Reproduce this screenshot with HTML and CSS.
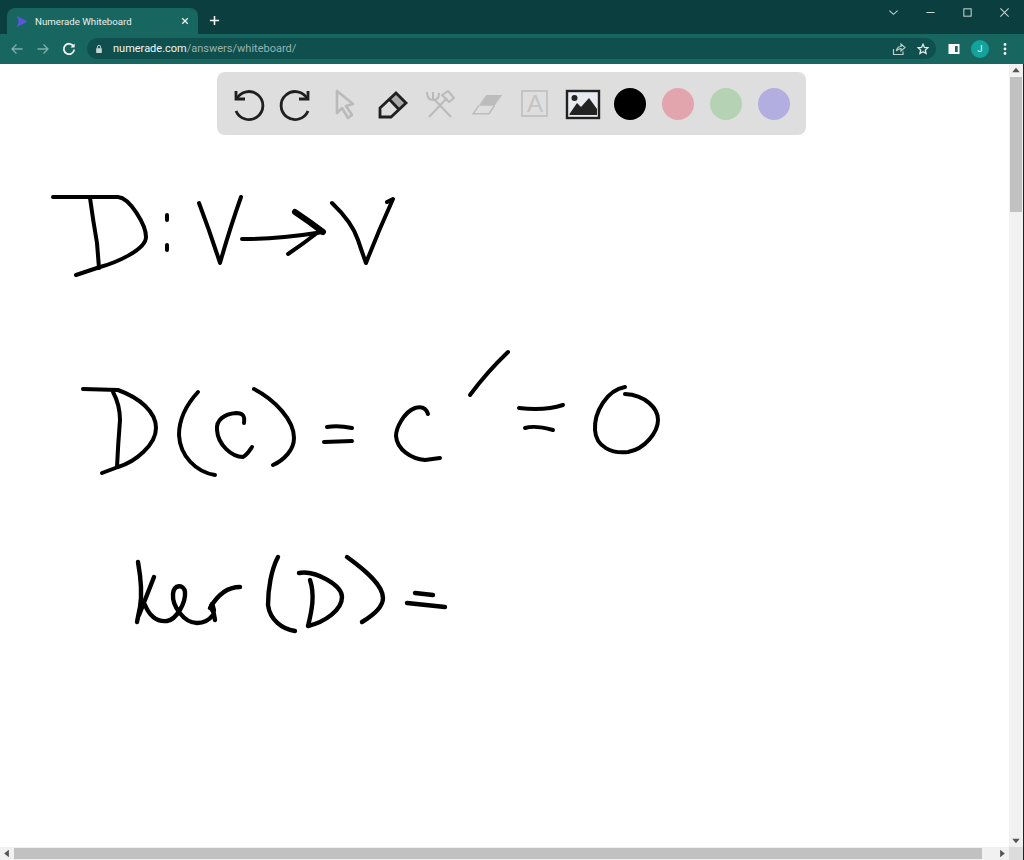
FILE: index.html
```html
<!DOCTYPE html>
<html lang="en">
<head>
<meta charset="utf-8">
<title>Numerade Whiteboard</title>
<link rel="stylesheet" href="styles.css">
</head>
<body>
<div class="window">
  <header class="titlebar">
    <div class="tab">
      <svg class="favicon" viewBox="0 0 14 14"><path d="M1 0.5 L13.5 7 L1 13.5 L3.2 7 Z"/></svg>
      <span class="tab-title">Numerade Whiteboard</span>
      <svg class="tab-close" viewBox="0 0 10 10"><path d="M1.5 1.5 L8.5 8.5 M8.5 1.5 L1.5 8.5"/></svg>
    </div>
    <svg class="new-tab" viewBox="0 0 12 12"><path d="M6 1 V11 M1 6 H11"/></svg>
    <div class="win-controls">
      <svg class="win-icon" viewBox="0 0 12 12"><path d="M1.5 4 L6 8 L10.5 4"/></svg>
      <svg class="win-icon" viewBox="0 0 12 12"><path d="M1.5 6 H10.5"/></svg>
      <svg class="win-icon" viewBox="0 0 12 12"><rect x="2" y="2" width="8" height="8"/></svg>
      <svg class="win-icon" viewBox="0 0 12 12"><path d="M1.5 1.5 L10.5 10.5 M10.5 1.5 L1.5 10.5"/></svg>
    </div>
  </header>
  <nav class="navbar">
    <svg class="nav-icon dim" viewBox="0 0 14 14"><path d="M12.5 7 H2 M6.5 2.5 L2 7 L6.5 11.5"/></svg>
    <svg class="nav-icon dim" viewBox="0 0 14 14"><path d="M1.5 7 H12 M7.5 2.5 L12 7 L7.5 11.5"/></svg>
    <svg class="nav-icon" viewBox="0 0 14 14"><path d="M11.6 4.5 A5.2 5.2 0 1 0 12.2 7.5"/><path class="solid" d="M12.6 1.5 V5.6 H8.5 Z"/></svg>
    <div class="omnibox">
      <svg class="lock" viewBox="0 0 10 12"><path class="lock-body" d="M1.5 5 H8.5 V11 H1.5 Z"/><path class="lock-shackle" d="M3 5 V3.5 A2 2 0 0 1 7 3.5 V5"/></svg>
      <span class="url"><span class="url-host">numerade.com</span>/answers/whiteboard/</span>
      <svg class="omni-icon share" viewBox="0 0 14 14"><path d="M1.5 7 V12.5 H11 V9.5 M4.5 9 Q5 4.5 9 4.5 V2 L13 5.5 L9 9 V6.7 Q6 6.7 4.5 9 Z"/></svg>
      <svg class="omni-icon star" viewBox="0 0 14 14"><path d="M7 1.5 L8.7 5.2 L12.7 5.6 L9.7 8.3 L10.6 12.3 L7 10.2 L3.4 12.3 L4.3 8.3 L1.3 5.6 L5.3 5.2 Z"/></svg>
    </div>
    <svg class="panel-icon" viewBox="0 0 12 12"><path d="M0.5 1 H11.5 V11 H0.5 Z M7 3 V9 H9.7 V3 Z" fill-rule="evenodd"/></svg>
    <span class="avatar">J</span>
    <svg class="menu-icon" viewBox="0 0 4 14"><circle cx="2" cy="2.5" r="1.4"/><circle cx="2" cy="7" r="1.4"/><circle cx="2" cy="11.5" r="1.4"/></svg>
  </nav>
  <div class="viewport">
    <main class="canvas">
      <svg class="drawing" viewBox="0 0 1009 783">
        <g transform="translate(0 -64)">
          <path d="M53 197 L118 197 C130 198 146 225 146 237 C146 250 115 263 100 267 L76 275"/>
          <path d="M90 198 Q93 220 97 243 Q98 255 99 268"/>
          <path d="M167 215 L167 220 M167 245 L167 250"/>
          <path d="M199 203 Q210 232 220 263 Q230 228 241 197"/>
          <path d="M242 239 Q280 239 323 232"/>
          <path class="thick" d="M295 212 Q310 222 323 232"/>
          <path d="M288 254 Q303 244 317 233"/>
          <path d="M332 203 Q352 222 358 240 Q362 252 366 263 Q378 232 393 199 L387 202"/>
          <path d="M83 389 L118 390 C140 398 156 412 156 428 C156 445 135 462 118 467 L102 473"/>
          <path d="M113 392 Q120 405 120 420 Q118 445 117 467"/>
          <path d="M198 392 C186 405 179 420 179 435 C180 456 196 472 215 475"/>
          <path d="M244 423 C245 416 243 413 236 413 C224 414 216 420 217 430 C218 445 232 457 243 457 C247 455 250 450 252 447"/>
          <path d="M254 389 C275 400 294 420 294 438 C294 450 284 460 273 465"/>
          <path d="M327 427 Q338 425 352 428 M324 442 L352 441"/>
          <path d="M428 414 C426 408 422 406 415 408 C404 412 396 428 396 436 C397 450 412 459 425 460 L440 458"/>
          <path d="M508 352 Q487 372 470 395"/>
          <path d="M519 408 Q545 411 563 405 M525 428 Q535 425 553 430"/>
          <path d="M625 387 C607 390 594 412 595 430 C596 447 612 454 628 452 C645 449 658 432 658 420 C658 408 645 395 625 394"/>
          <g class="heavy-ink">
            <path d="M138 562 Q143 590 140 607 L137 622"/>
            <path d="M154 577 L145 600 L139 615"/>
            <path d="M145 605 C150 617 158 622 167 621 C176 620 186 603 185 592 C184 584 174 584 173 594 C172 606 184 623 197 623 C204 623 210 619 213 615"/>
            <path d="M212 604 L215 620 M210 608 Q222 587 240 587"/>
            <path class="thick" d="M212 606 L213 610"/>
            <path d="M278 557 C271 570 268 590 268 605 C270 620 282 629 295 631"/>
            <path d="M299 573 C315 570 342 585 342 597 C342 610 325 622 308 626 C312 610 315 595 310 580"/>
            <path d="M347 557 C365 570 383 585 383 598 C383 608 372 616 362 622"/>
            <path d="M415 593 L433 595 M407 603 L445 607"/>
          </g>
        </g>
      </svg>
      <div class="tools">
        <svg class="tool" viewBox="0 0 32 32"><path class="ink" d="M4.5 11 A14 14 0 1 1 4 23"/><path class="ink" d="M4 3 V11 H13"/></svg>
        <svg class="tool" viewBox="0 0 32 32"><path class="ink" d="M27.5 11 A14 14 0 1 0 28 23"/><path class="ink" d="M28 3 V11 H19"/></svg>
        <svg class="tool" viewBox="0 0 32 32"><path class="off heavy" d="M9 3 L25 16 L18 18 L24 27 L20 30 L14 20 L9 25 Z"/></svg>
        <svg class="tool" viewBox="0 0 32 32"><path class="cap" d="M20 5 L30 15 L23.5 22 L13.5 11.5 Z"/><path class="ink" d="M4 20 L20 5 L30 15 L15 29 H4 Z M13.5 11.5 L23.5 22"/></svg>
        <svg class="tool" viewBox="0 0 32 32"><path class="off" d="M5 29 L23 10 M27 29 L10 11 M3 4 Q3 12 9 12 Q15 12 15 5 M9 4 V12 M18 7 L24 3 L30 10 L25 14 Z"/></svg>
        <svg class="tool" viewBox="0 0 36 32"><path class="off-fill" d="M16 6 H34 L25.3 18 H7.5 Z"/><path class="off-thin" d="M7.5 18 L1.3 27 H19 L25.3 18"/></svg>
        <span class="tool letter">A</span>
        <svg class="tool" viewBox="0 0 32 32"><rect class="frame" x="1" y="3" width="32" height="27"/><circle class="solid-dark" cx="8.5" cy="10" r="3"/><path class="solid-dark" d="M3.5 26 L11 15 L15 19 L23 10 L31 21 V27 H3.5 Z"/></svg>
        <span class="swatch swatch-black"></span>
        <span class="swatch swatch-pink"></span>
        <span class="swatch swatch-green"></span>
        <span class="swatch swatch-purple"></span>
      </div>
    </main>
    <aside class="vscroll">
      <svg class="arrow" viewBox="0 0 14 14"><path d="M7 4 L11 9 H3 Z"/></svg>
      <div class="vthumb"></div>
      <div class="fill"></div>
      <svg class="arrow" viewBox="0 0 14 14"><path d="M7 10 L11 5 H3 Z"/></svg>
    </aside>
  </div>
  <div class="hscroll">
    <svg class="arrow" viewBox="0 0 14 14"><path d="M4 7 L9 3 V11 Z"/></svg>
    <div class="hthumb"></div>
    <div class="fill"></div>
    <svg class="arrow" viewBox="0 0 14 14"><path d="M10 7 L5 3 V11 Z"/></svg>
    <div class="corner"></div>
  </div>
</div>
</body>
</html>
```
FILE: styles.css
```css
* { box-sizing: border-box; }
html, body { margin: 0; height: 100%; overflow: hidden; background: #fff; }
svg { display: block; flex: none; overflow: visible; }

.window {
  width: 1024px;
  height: 860px;
  display: flex;
  flex-direction: column;
  font-family: Roboto, "Noto Sans", sans-serif;
}

.titlebar {
  height: 34px;
  flex: none;
  display: flex;
  align-items: flex-end;
  background: #0a3e3f;
}
.tab {
  width: 191px;
  height: 26px;
  margin-left: 7px;
  padding: 0 9px 0 9px;
  display: flex;
  align-items: center;
  background: #17665f;
  border-radius: 8px 8px 0 0;
}
.favicon { width: 12px; height: 13px; }
.favicon path { fill: #5b57dc; }
.tab-title {
  margin-left: 7px;
  font-size: 9.7px;
  color: #e8f1ef;
  white-space: nowrap;
}
.tab-close { width: 8px; height: 8px; margin-left: auto; }
.tab-close path { fill: none; stroke: #e8f1ef; stroke-width: 1.6; }
.new-tab { width: 11px; height: 11px; margin: 0 0 8px 11px; }
.new-tab path { fill: none; stroke: #f4f8f7; stroke-width: 1.7; }
.win-controls {
  margin-left: auto;
  align-self: stretch;
  display: flex;
  gap: 26px;
  padding: 7px 14px 0 0;
}
.win-icon { width: 11px; height: 11px; }
.win-icon path, .win-icon rect { fill: none; stroke: #c9d8d6; stroke-width: 1.1; }

.navbar {
  height: 30px;
  flex: none;
  display: flex;
  align-items: center;
  padding: 0 12px 1px 10px;
  background: #17665f;
}
.nav-icon { width: 14px; height: 14px; margin-right: 12px; }
.nav-icon path { fill: none; stroke: #f1f6f5; stroke-width: 1.8; }
.nav-icon .solid { fill: #f1f6f5; stroke: none; }
.nav-icon.dim path { stroke: #7fb0aa; stroke-width: 1.3; }
.omnibox {
  width: 849px;
  height: 21px;
  margin-left: -1px;
  padding: 0 6px 0 8px;
  display: flex;
  align-items: center;
  background: #0f4f4d;
  border-radius: 11px;
}
.lock { width: 8px; height: 10px; }
.lock-body { fill: #c6d6d4; }
.lock-shackle { fill: none; stroke: #c6d6d4; stroke-width: 1.2; }
.url {
  margin-left: 10px;
  font-size: 11px;
  color: #97b4b1;
  white-space: nowrap;
}
.url-host { color: #f1f6f5; }
.omni-icon { width: 14px; height: 14px; }
.omni-icon path { fill: none; stroke: #b9cfcc; stroke-width: 1.2; }
.share { margin-left: auto; }
.star { width: 12px; height: 12px; margin: 0 1px 0 11px; }
.star path { stroke: #e6eeed; stroke-width: 1.5; }
.panel-icon { width: 12px; height: 12px; margin-left: 12px; }
.panel-icon path { fill: #fff; }
.avatar {
  width: 18px;
  height: 18px;
  margin-left: 11px;
  display: flex;
  align-items: center;
  justify-content: center;
  border-radius: 50%;
  background: #14a39c;
  color: #e9f7f6;
  font-size: 9px;
}
.menu-icon { width: 4px; height: 14px; margin-left: 14px; }
.menu-icon circle { fill: #f1f6f5; }

.viewport {
  flex: 1;
  min-height: 0;
  display: flex;
  border-right: 1px solid #222;
}
.canvas {
  flex: 1;
  min-width: 0;
  position: relative;
  background: #fff;
}
.drawing { width: 1009px; height: 783px; filter: blur(0.4px); }
.drawing path {
  fill: none;
  stroke: #000;
  stroke-width: 4;
  stroke-linecap: round;
  stroke-linejoin: round;
}
.drawing .heavy-ink path { stroke-width: 4.4; }
.drawing .thick, .drawing .heavy-ink .thick { stroke-width: 6; }

.tools {
  position: absolute;
  top: 8px;
  left: 217px;
  width: 589px;
  height: 63px;
  padding: 0 16px 0 15px;
  display: flex;
  align-items: center;
  justify-content: space-between;
  background: #dedede;
  border-radius: 8px;
}
.tool { width: 32px; height: 32px; }
.ink { fill: none; stroke: #1f1f1f; stroke-width: 2.8; }
.cap { fill: #a9a9a9; }
.off { fill: none; stroke: #bababa; stroke-width: 2; stroke-linejoin: round; }
.heavy { stroke-width: 2.6; }
.off-fill { fill: #bcbcbc; }
.off-thin { fill: none; stroke: #bcbcbc; stroke-width: 1.6; }
.letter {
  display: flex;
  align-items: center;
  justify-content: center;
  width: 27px;
  height: 27px;
  margin: 0 2px;
  border: 2.5px solid #c4c4c4;
  color: #c4c4c4;
  font: 24px/1 "Liberation Sans", sans-serif;
}
.frame { fill: #e8eaf0; stroke: #222; stroke-width: 2.4; }
.solid-dark { fill: #222; }
.swatch { width: 32px; height: 32px; border-radius: 50%; }
.swatch-black { background: #000; }
.swatch-pink { background: #e2a5ae; }
.swatch-green { background: #b6d2b4; }
.swatch-purple { background: #b3aee0; }

.vscroll {
  width: 14px;
  flex: none;
  display: flex;
  flex-direction: column;
  background: #f1f1f1;
}
.arrow { width: 14px; height: 13px; }
.arrow path { fill: #555; }
.vthumb { width: 12px; height: 135px; margin-left: 1px; background: #c1c1c1; }
.fill { flex: 1; }

.hscroll {
  height: 13px;
  flex: none;
  display: flex;
  background: #f1f1f1;
  border-right: 1px solid #222;
}
.hthumb { width: 968px; height: 11px; margin-top: 1px; background: #c1c1c1; }
.corner { width: 14px; background: #dcdcdc; }
```
